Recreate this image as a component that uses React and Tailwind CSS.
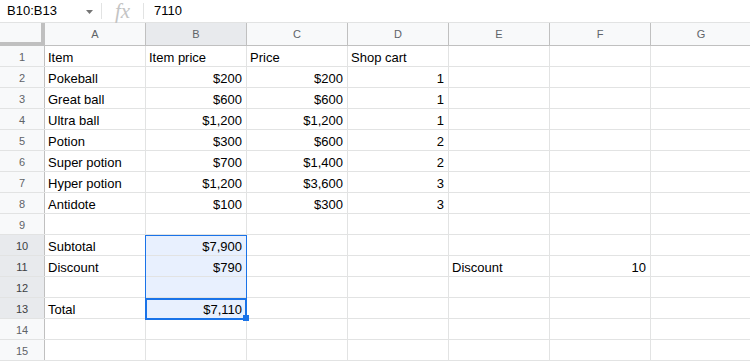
import React from 'react';

const COLS = ['A', 'B', 'C', 'D', 'E', 'F', 'G'];

// each row: [A, B, C, D, E, F, G]; numbers are right-aligned
const ROWS = [
  ['Item', 'Item price', 'Price', 'Shop cart'],
  ['Pokeball', '$200', '$200', '1'],
  ['Great ball', '$600', '$600', '1'],
  ['Ultra ball', '$1,200', '$1,200', '1'],
  ['Potion', '$300', '$600', '2'],
  ['Super potion', '$700', '$1,400', '2'],
  ['Hyper potion', '$1,200', '$3,600', '3'],
  ['Antidote', '$100', '$300', '3'],
  [],
  ['Subtotal', '$7,900'],
  ['Discount', '$790', '', '', 'Discount', '10'],
  [],
  ['Total', '$7,110'],
  [],
  [],
];

const isNumber = (v) => /^[$\d]/.test(v);

// sheets bottom-aligns cell text, hence the top padding
const Cell = ({ value, selected }) => (
  <div
    className={`w-[101px] h-full shrink-0 border-r border-[#e2e3e3] px-[3px] pt-[3px] overflow-hidden whitespace-nowrap leading-[17px] text-[13px] text-black ${
      isNumber(value) ? 'text-right pr-[4px]' : 'text-left'
    } ${selected ? 'bg-[#e8f0fe]' : 'bg-white'}`}
  >
    {value}
  </div>
);

export default function App() {
  return (
    <div className="w-[750px] h-[362px] overflow-hidden bg-white font-['Liberation_Sans',Arial,sans-serif]">
      {/* Formula bar */}
      <div className="h-[23px] flex items-center border-b border-[#e2e3e3] text-[13px] text-black">
        <div className="w-[102px] h-[16px] flex items-center pl-[7px] pr-[8px] border-r border-[#e2e3e3]">
          <span className="flex-1">B10:B13</span>
          <svg width="7" height="4" viewBox="0 0 7 4" className="mt-[1px]">
            <path d="M0 0h7L3.5 4z" fill="#757575" />
          </svg>
        </div>
        <div className="w-[42px] h-[16px] flex items-center justify-center border-r border-[#e2e3e3]">
          <span className="font-['Liberation_Serif',serif] italic text-[21px] text-[#c4c4c4] leading-none">fx</span>
        </div>
        <span className="pl-[10px]">7110</span>
      </div>

      {/* Grid */}
      <div className="relative">
        {/* Column headers */}
        <div className="flex h-[23px]">
          <div className="w-[45px] shrink-0 bg-[#f8f9fa] border-r-4 border-b-4 border-[#c0c0c0]" />
          {COLS.map((c) => (
            <div
              key={c}
              className={`w-[101px] shrink-0 flex items-center justify-center border-r border-b border-[#c0c0c0] text-[11px] text-[#5f6368] ${
                c === 'B' ? 'bg-[#e8eaed] text-[#3c4043]' : 'bg-[#f8f9fa]'
              }`}
            >
              {c}
            </div>
          ))}
        </div>

        {/* Rows */}
        {ROWS.map((row, i) => {
          const n = i + 1;
          const rowSel = n >= 10 && n <= 13;
          return (
            <div key={n} className="flex h-[21px] border-b border-[#e2e3e3]">
              <div
                className={`w-[45px] shrink-0 flex items-center justify-center pt-[3px] border-r border-[#c0c0c0] text-[11px] ${
                  rowSel ? 'bg-[#e8eaed] text-[#3c4043]' : 'bg-[#f8f9fa] text-[#5f6368]'
                }`}
              >
                {n}
              </div>
              {COLS.map((c, j) => (
                <Cell key={c} value={row[j] || ''} selected={rowSel && j === 1} />
              ))}
            </div>
          );
        })}

        {/* Selection range B10:B13 */}
        <div className="absolute left-[145px] top-[212px] w-[102px] h-[85px] border border-[#1a73e8] pointer-events-none" />
        {/* Active cell B13 */}
        <div className="absolute left-[145px] top-[275px] w-[102px] h-[22px] border-2 border-[#1a73e8] pointer-events-none" />
        {/* Fill handle */}
        <div className="absolute left-[243px] top-[292px] w-[6px] h-[6px] bg-[#1a73e8]" />
      </div>
    </div>
  );
}
